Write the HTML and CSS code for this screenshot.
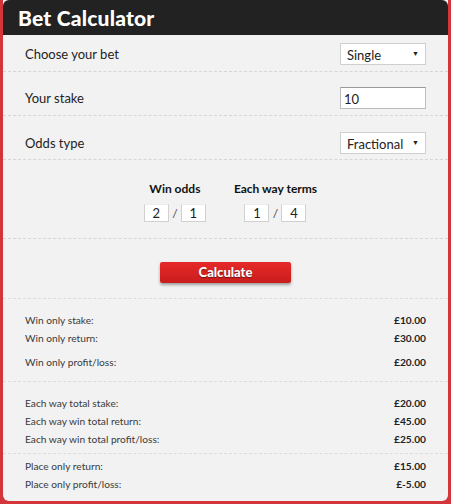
FILE: index.html
```html
<!DOCTYPE html>
<html>
<head>
<meta charset="utf-8">
<link rel="stylesheet" href="styles.css">
</head>
<body>
<div class="panel">
  <div class="header">Bet Calculator</div>
  <div class="row row-first">
    <span class="label">Choose your bet</span>
    <div class="select"><span>Single</span><span class="arrow">&#9660;</span></div>
  </div>
  <div class="row">
    <span class="label">Your stake</span>
    <div class="input">10</div>
  </div>
  <div class="row row-third">
    <span class="label">Odds type</span>
    <div class="select"><span>Fractional</span><span class="arrow">&#9660;</span></div>
  </div>
  <div class="odds">
    <div class="group">
      <div class="glabel">Win odds</div>
      <div class="frac"><span class="box">2</span><span class="slash">/</span><span class="box">1</span></div>
    </div>
    <div class="group">
      <div class="glabel">Each way terms</div>
      <div class="frac"><span class="box">1</span><span class="slash">/</span><span class="box">4</span></div>
    </div>
  </div>
  <div class="calc">
    <div class="button">Calculate</div>
  </div>
  <div class="results r1">
    <div class="line"><span>Win only stake:</span><b>£10.00</b></div>
    <div class="line"><span>Win only return:</span><b>£30.00</b></div>
    <div class="line tall"><span>Win only profit/loss:</span><b>£20.00</b></div>
  </div>
  <div class="results r2">
    <div class="line"><span>Each way total stake:</span><b>£20.00</b></div>
    <div class="line"><span>Each way win total return:</span><b>£45.00</b></div>
    <div class="line"><span>Each way win total profit/loss:</span><b>£25.00</b></div>
  </div>
  <div class="results r3">
    <div class="line"><span>Place only return:</span><b>£15.00</b></div>
    <div class="line"><span>Place only profit/loss:</span><b>£-5.00</b></div>
  </div>
</div>
</body>
</html>
```
FILE: styles.css
```css
html, body {
  margin: 0;
  padding: 0;
  background: #d3353a;
}
body {
  font-family: "Lato", "Open Sans", sans-serif;
  color: #222;
  height: 504px;
  overflow: hidden;
}
.panel {
  margin: 0 3px;
  height: 501px;
  background: #f2f2f2;
  border-radius: 0 0 6px 6px;
  overflow: hidden;
  box-sizing: border-box;
}
.header {
  height: 35px;
  background: #222;
  color: #fff;
  font-weight: 900;
  font-size: 21px;
  line-height: 36px;
  padding-left: 15px;
  border-radius: 6px 6px 0 0;
  letter-spacing: 0.2px;
}
.row {
  display: flex;
  justify-content: space-between;
  align-items: center;
  padding: 15px 22px 6px;
  border-bottom: 1px dashed #d6d6d6;
}
.row-first { padding-top: 8px; }
.row-third { padding-top: 16px; padding-bottom: 5px; }
.label {
  font-size: 13px;
  color: #222;
}
.select, .input {
  width: 86px;
  height: 22px;
  box-sizing: border-box;
  background: #fff;
  border: 1px solid #cfcfcf;
  font-size: 13px;
  display: flex;
  align-items: center;
  justify-content: space-between;
  padding: 2px 6px 0 6px;
}
.input {
  border-color: #bdbdbd;
  border-top-color: #999;
  padding-left: 3px;
}
.arrow {
  font-size: 7px;
  margin-bottom: 4px;
}
.odds {
  display: flex;
  justify-content: center;
  gap: 28px;
  padding: 21px 0 16px 10px;
  border-bottom: 1px dashed #d6d6d6;
}
.group {
  display: flex;
  flex-direction: column;
  align-items: center;
  gap: 7px;
}
.glabel {
  font-weight: 700;
  font-size: 12px;
  line-height: 16px;
  color: #111;
}
.frac {
  display: flex;
  align-items: center;
}
.box {
  width: 25px;
  height: 18px;
  box-sizing: border-box;
  background: #fff;
  border: 1px solid #d0d0d0;
  border-top-color: #ececec;
  font-size: 13px;
  text-align: center;
  line-height: 17px;
}
.slash {
  width: 12px;
  text-align: center;
  font-size: 12px;
  color: #444;
}
.calc {
  display: flex;
  justify-content: center;
  padding: 23px 0 15px;
  border-bottom: 1px dashed #dcdcdc;
}
.button {
  width: 131px;
  height: 21px;
  box-sizing: border-box;
  background: linear-gradient(#e52a28, #c91d1d);
  border-radius: 2px;
  box-shadow: 0 2px 3px rgba(0,0,0,0.35);
  color: #fff;
  font-weight: 900;
  font-size: 13px;
  text-align: center;
  line-height: 21px;
  text-shadow: 0 1px 1px rgba(0,0,0,0.5);
}
.results {
  padding: 12px 22px 10px;
  border-bottom: 1px dashed #dcdcdc;
}
.r2 { padding-bottom: 5px; }
.r3 { padding-top: 3px; padding-bottom: 8px; border-bottom: none; }
.line {
  display: flex;
  justify-content: space-between;
  height: 18px;
  line-height: 18px;
  font-size: 10.2px;
  color: #3a3a3a;
}
.line.tall {
  height: 24px;
  line-height: 30px;
}
.line b {
  font-weight: 700;
  color: #222;
}
```
